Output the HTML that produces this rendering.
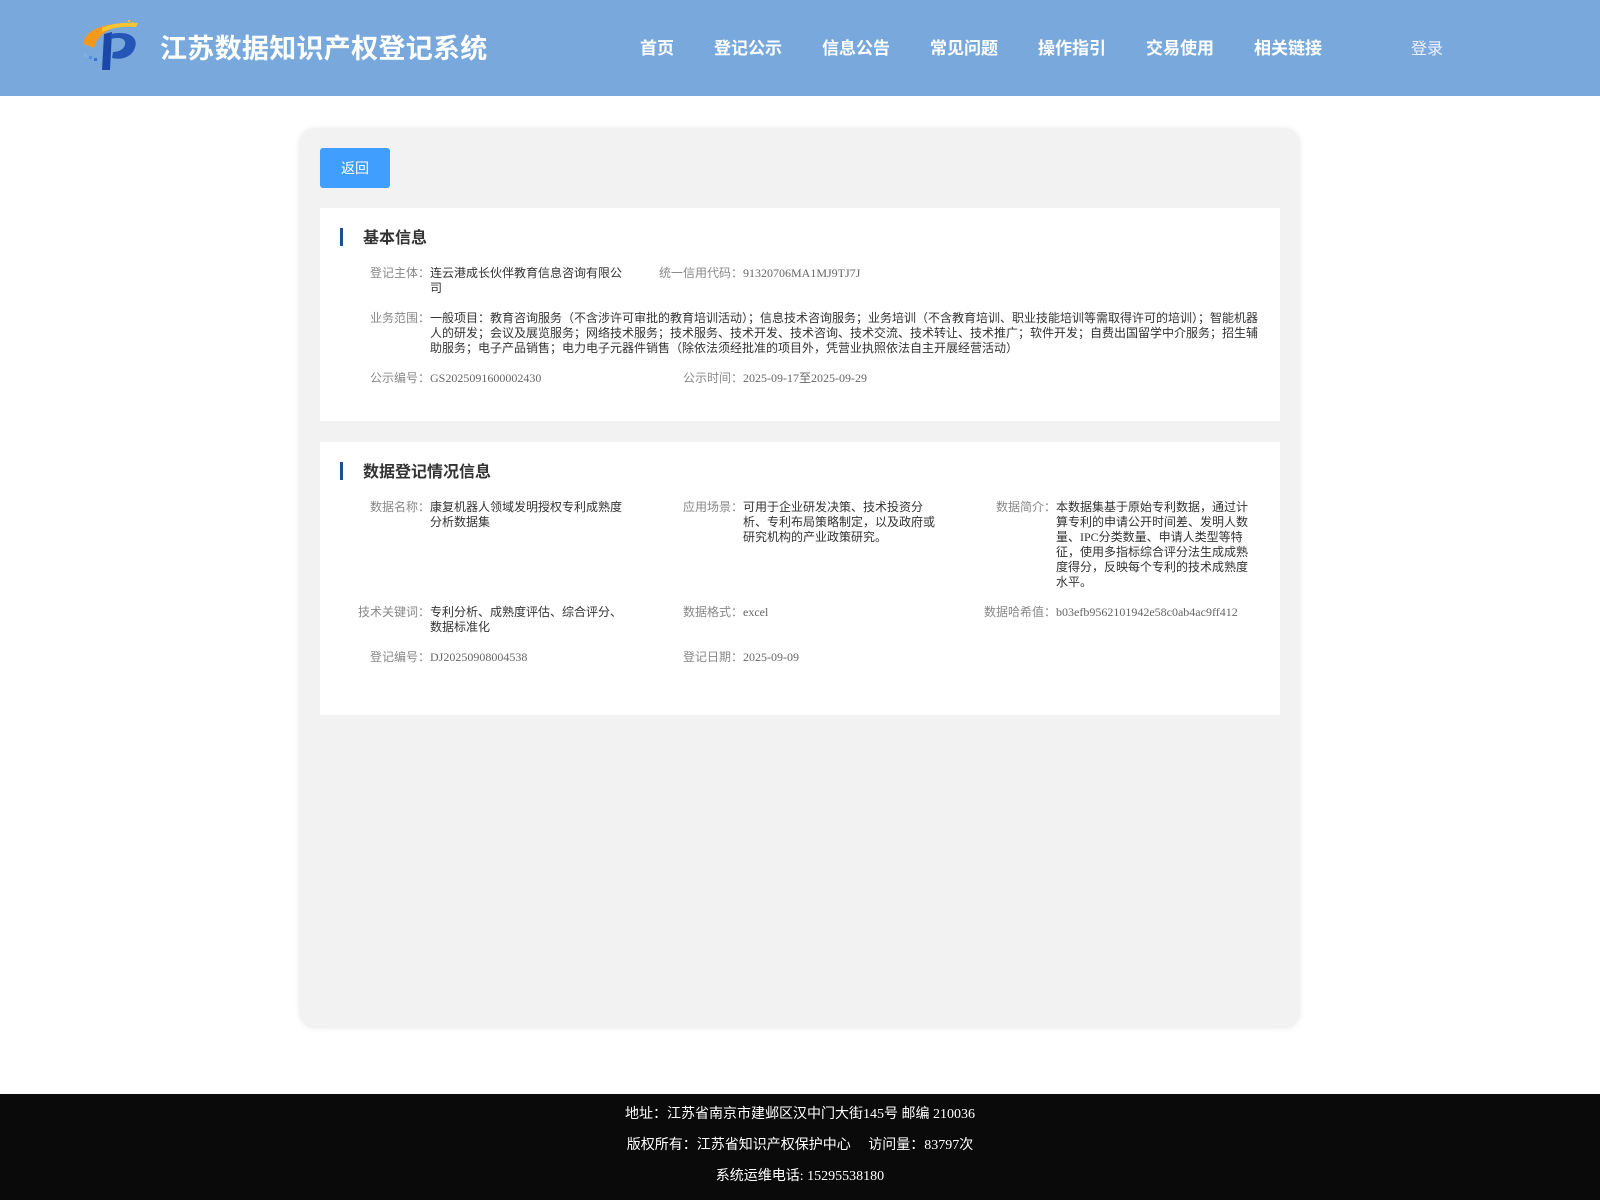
<!DOCTYPE html>
<html><head><meta charset="utf-8"><style>
*{margin:0;padding:0;box-sizing:border-box}
body{width:1600px;height:1200px;background:#fff;position:relative;font-family:"Liberation Serif","Noto Sans CJK SC",serif;overflow:hidden}
.hd{position:absolute;left:0;top:0;width:1600px;height:96px;background:#79a9dc}
.title{position:absolute;left:160px;top:27px;color:#fff;font-size:27px;font-weight:bold;font-family:"Liberation Sans","Noto Sans CJK SC",sans-serif;letter-spacing:0.3px}
.nav{position:absolute;top:34px;color:#fff;font-size:17px;font-weight:bold;font-family:"Liberation Sans","Noto Sans CJK SC",sans-serif}
.login{position:absolute;left:1411px;top:35px;color:#eef;font-size:16px;font-family:"Liberation Sans","Noto Sans CJK SC",sans-serif}
.card{position:absolute;left:299px;top:128px;width:1001px;height:900px;background:#f2f2f2;border-radius:16px;box-shadow:0 0 6px rgba(0,0,0,0.08)}
.btn{position:absolute;left:320px;top:148px;width:70px;height:40px;background:#409eff;border-radius:3px;color:#fff;font-size:14px;line-height:40px;text-align:center;font-family:"Liberation Sans","Noto Sans CJK SC",sans-serif}
.sec{position:absolute;left:320px;width:960px;background:#fff}
.st{position:absolute;font-size:16px;font-weight:bold;color:#333;font-family:"Liberation Sans","Noto Sans CJK SC",sans-serif}
.bar{position:absolute;left:340px;width:3px;height:18px;background:#1e4f8f}
.lb{position:absolute;font-size:12px;color:#888;text-align:right;width:120px;line-height:15px;font-family:"Liberation Serif","Noto Sans CJK SC",serif}
.v{position:absolute;font-size:12px;color:#333;line-height:15px;width:196px;font-family:"Liberation Serif","Noto Sans CJK SC",serif}
.ft{position:absolute;left:0;top:1094px;width:1600px;height:106px;background:#0a0a0a;color:#fff;font-size:14px;text-align:center}
.ft div{position:absolute;left:0;width:1600px}
</style></head><body>
<div class="hd">
<svg style="position:absolute;left:80px;top:18px" width="60" height="54" viewBox="0 0 60 54">
<path d="M4 26 C2 12 30 2 58 6 C40 6 18 12 14 30 Z" fill="#f39a1c"/>
<path d="M22 10 C30 6 44 4 58 5 L56 9 C44 8 32 10 22 14Z" fill="#f7c531"/>
<path d="M24 16 L32 14 L30 52 L22 52 Z" fill="#1b48a8"/>
<path d="M30 16 C50 12 60 20 54 32 C50 40 40 42 32 40 L33 34 C40 34 46 30 45 24 C44 20 38 19 31 21 Z" fill="#2456b8"/>
<rect x="4" y="36" width="3" height="3" fill="#7fb0e8"/><rect x="9" y="38" width="3" height="3" fill="#5a8fe0"/><rect x="14" y="40" width="3" height="3" fill="#3b6fd0"/>
<rect x="48" y="2" width="2" height="2" fill="#f7c531"/><rect x="52" y="4" width="2" height="2" fill="#f7c531"/>
</svg>
<div class="title">江苏数据知识产权登记系统</div>
<div class="nav" style="left:640px">首页</div>
<div class="nav" style="left:714px">登记公示</div>
<div class="nav" style="left:822px">信息公告</div>
<div class="nav" style="left:930px">常见问题</div>
<div class="nav" style="left:1038px">操作指引</div>
<div class="nav" style="left:1146px">交易使用</div>
<div class="nav" style="left:1254px">相关链接</div>
<div class="login">登录</div>
</div>
<div class="card"></div>
<div class="btn">返回</div>

<div class="sec" style="top:208px;height:213px"></div>
<div class="bar" style="top:228px"></div>
<div class="st" style="left:363px;top:224px">基本信息</div>
<div class="lb" style="left:310px;top:266px">登记主体：</div>
<div class="v" style="left:430px;top:266px">连云港成长伙伴教育信息咨询有限公司</div>
<div class="lb" style="left:623px;top:266px">统一信用代码：</div>
<div class="v" style="left:743px;top:266px;color:#666;width:300px">91320706MA1MJ9TJ7J</div>
<div class="lb" style="left:310px;top:311px">业务范围：</div>
<div class="v" style="left:430px;top:311px;width:832px">一般项目：教育咨询服务（不含涉许可审批的教育培训活动）；信息技术咨询服务；业务培训（不含教育培训、职业技能培训等需取得许可的培训）；智能机器人的研发；会议及展览服务；网络技术服务；技术服务、技术开发、技术咨询、技术交流、技术转让、技术推广；软件开发；自费出国留学中介服务；招生辅助服务；电子产品销售；电力电子元器件销售（除依法须经批准的项目外，凭营业执照依法自主开展经营活动）</div>
<div class="lb" style="left:310px;top:371px">公示编号：</div>
<div class="v" style="left:430px;top:371px;color:#666;width:300px">GS2025091600002430</div>
<div class="lb" style="left:623px;top:371px">公示时间：</div>
<div class="v" style="left:743px;top:371px;color:#666;width:300px">2025-09-17至2025-09-29</div>

<div class="sec" style="top:442px;height:273px"></div>
<div class="bar" style="top:462px"></div>
<div class="st" style="left:363px;top:458px">数据登记情况信息</div>
<div class="lb" style="left:310px;top:500px">数据名称：</div>
<div class="v" style="left:430px;top:500px">康复机器人领域发明授权专利成熟度分析数据集</div>
<div class="lb" style="left:623px;top:500px">应用场景：</div>
<div class="v" style="left:743px;top:500px;width:194px">可用于企业研发决策、技术投资分析、专利布局策略制定，以及政府或研究机构的产业政策研究。</div>
<div class="lb" style="left:936px;top:500px">数据简介：</div>
<div class="v" style="left:1056px;top:500px">本数据集基于原始专利数据，通过计算专利的申请公开时间差、发明人数量、IPC分类数量、申请人类型等特征，使用多指标综合评分法生成成熟度得分，反映每个专利的技术成熟度水平。</div>
<div class="lb" style="left:310px;top:605px">技术关键词：</div>
<div class="v" style="left:430px;top:605px">专利分析、成熟度评估、综合评分、数据标准化</div>
<div class="lb" style="left:623px;top:605px">数据格式：</div>
<div class="v" style="left:743px;top:605px;color:#666">excel</div>
<div class="lb" style="left:936px;top:605px">数据哈希值：</div>
<div class="v" style="left:1056px;top:605px;color:#666;width:240px">b03efb9562101942e58c0ab4ac9ff412</div>
<div class="lb" style="left:310px;top:650px">登记编号：</div>
<div class="v" style="left:430px;top:650px;color:#666">DJ20250908004538</div>
<div class="lb" style="left:623px;top:650px">登记日期：</div>
<div class="v" style="left:743px;top:650px;color:#666">2025-09-09</div>

<div class="ft">
<div style="top:9px">地址：江苏省南京市建邺区汉中门大街145号 邮编 210036</div>
<div style="top:40px">版权所有：江苏省知识产权保护中心&nbsp;&nbsp;&nbsp;&nbsp;&nbsp;访问量：83797次</div>
<div style="top:71px">系统运维电话: 15295538180</div>
</div>
</body></html>
